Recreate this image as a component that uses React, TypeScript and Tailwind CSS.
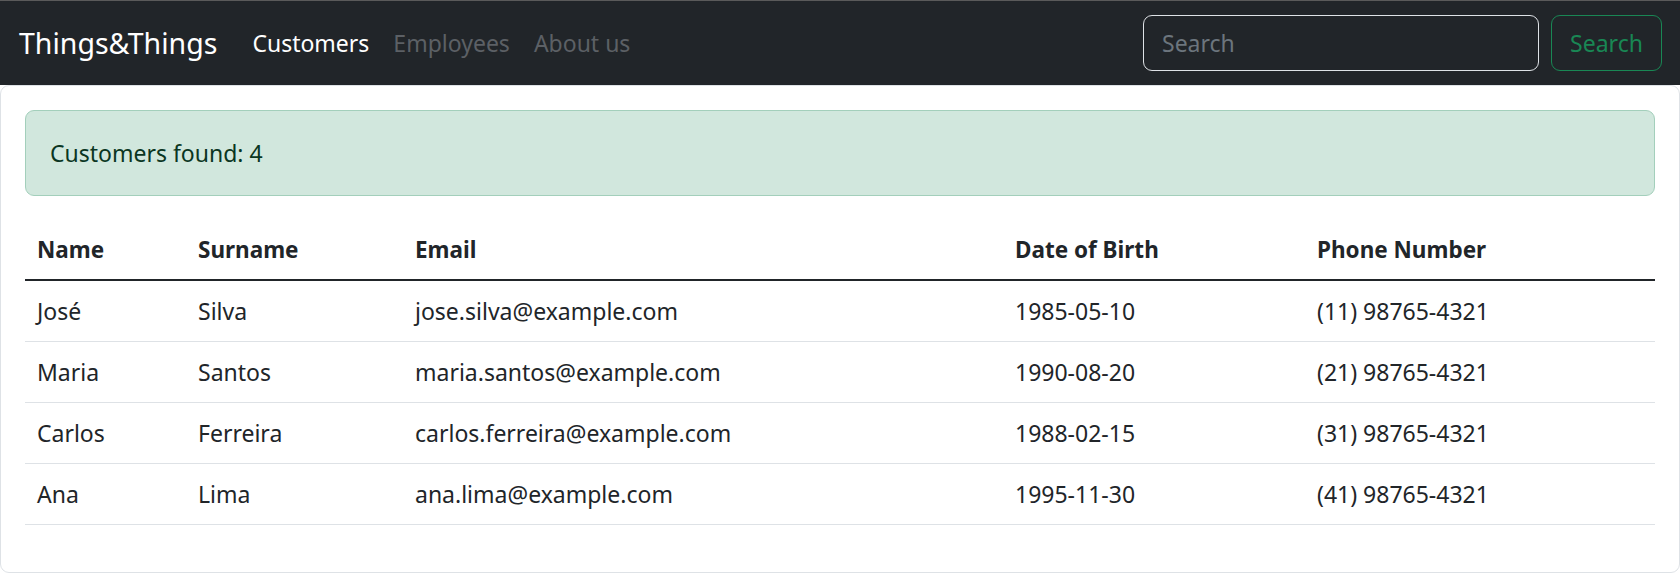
import React from 'react';

type Customer = {
  name: string;
  surname: string;
  email: string;
  dob: string;
  phone: string;
};

const customers: Customer[] = [
  { name: 'José', surname: 'Silva', email: 'jose.silva@example.com', dob: '1985-05-10', phone: '(11) 98765-4321' },
  { name: 'Maria', surname: 'Santos', email: 'maria.santos@example.com', dob: '1990-08-20', phone: '(21) 98765-4321' },
  { name: 'Carlos', surname: 'Ferreira', email: 'carlos.ferreira@example.com', dob: '1988-02-15', phone: '(31) 98765-4321' },
  { name: 'Ana', surname: 'Lima', email: 'ana.lima@example.com', dob: '1995-11-30', phone: '(41) 98765-4321' },
];

const Navbar: React.FC = () => (
  <nav className="flex items-center h-[84px] bg-[#212529] pl-[19px] pr-[18px]">
    <span className="text-[28.5px] leading-[36px] text-white mr-[35px]">Things&amp;Things</span>
    <div className="flex items-center gap-[24px] text-[23px] leading-[36px]">
      <a className="text-white">Customers</a>
      <a className="text-[#5c6065]">Employees</a>
      <a className="text-[#5c6065]">About us</a>
    </div>
    <form className="ml-auto flex items-center gap-[12px]" onSubmit={e => e.preventDefault()}>
      <input
        type="text"
        placeholder="Search"
        className="w-[396px] h-[56px] rounded-[9px] border border-[#dee2e6] bg-[#212529] px-[18px] text-[23px] text-white placeholder:text-[#6c757d] outline-none"
      />
      <button
        type="submit"
        className="h-[56px] w-[111px] rounded-[9px] border border-[#198754] text-[23px] text-[#198754]"
      >
        Search
      </button>
    </form>
  </nav>
);

const CustomersTable: React.FC<{ rows: Customer[] }> = ({ rows }) => (
  <table className="w-full border-collapse text-left text-[23px] leading-[36px] text-[#212529]">
    <colgroup>
      <col className="w-[161px]" />
      <col className="w-[217px]" />
      <col className="w-[600px]" />
      <col className="w-[302px]" />
      <col />
    </colgroup>
    <thead>
      <tr className="border-b-2 border-[#212529] text-[22.5px]">
        <th className="px-[12px] pt-[12px] pb-[11px] font-bold">Name</th>
        <th className="px-[12px] pt-[12px] pb-[11px] font-bold">Surname</th>
        <th className="px-[12px] pt-[12px] pb-[11px] font-bold">Email</th>
        <th className="px-[12px] pt-[12px] pb-[11px] font-bold">Date of Birth</th>
        <th className="px-[12px] pt-[12px] pb-[11px] font-bold">Phone Number</th>
      </tr>
    </thead>
    <tbody>
      {rows.map(c => (
        <tr key={c.email} className="border-b border-[#dee2e6]">
          <td className="px-[12px] py-[12px]">{c.name}</td>
          <td className="px-[12px] py-[12px]">{c.surname}</td>
          <td className="px-[12px] py-[12px]">{c.email}</td>
          <td className="px-[12px] py-[12px]">{c.dob}</td>
          <td className="px-[12px] py-[12px]">{c.phone}</td>
        </tr>
      ))}
    </tbody>
  </table>
);

export default function App() {
  return (
    <div className="min-h-[573px] bg-white border-t border-[#5a5a5a]" style={{ fontFamily: '"Noto Sans", "Open Sans", sans-serif' }}>
      <Navbar />
      <div className="rounded-[9px] border border-[#dee2e6] p-[24px] h-[488px]">
        <div className="rounded-[9px] border border-[#a3cfbb] bg-[#d1e7dd] px-[24px] py-[24px] text-[23px] leading-[36px] text-[#0a3622] mb-[24px]">
          Customers found: {customers.length}
        </div>
        <CustomersTable rows={customers} />
      </div>
    </div>
  );
}
